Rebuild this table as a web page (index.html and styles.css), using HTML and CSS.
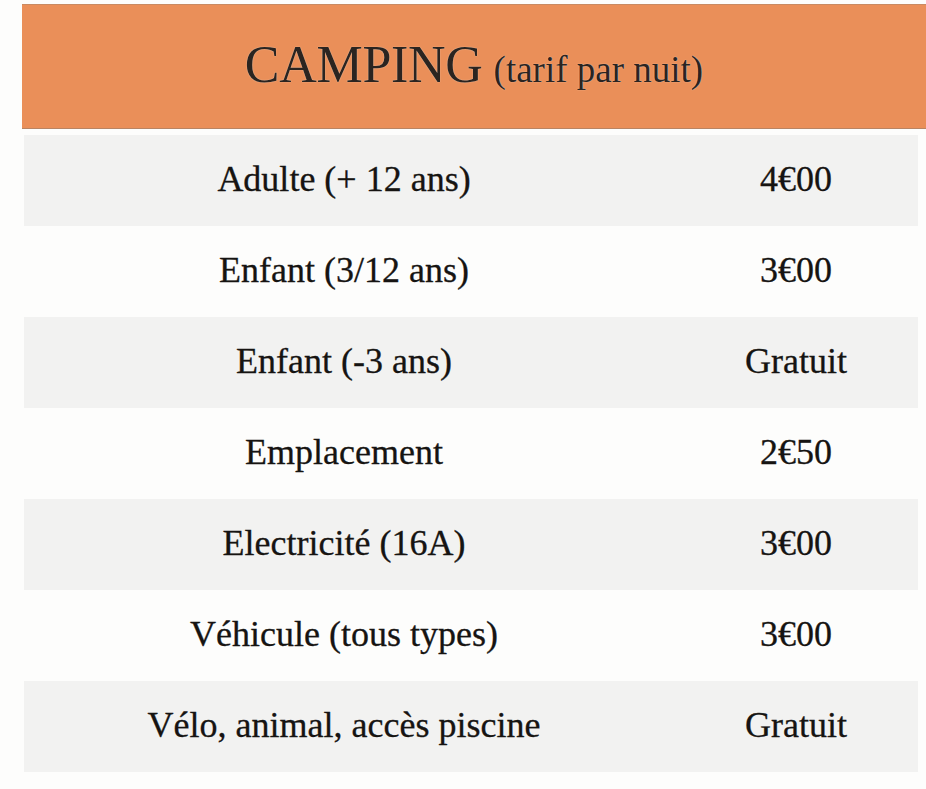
FILE: index.html
```html
<!DOCTYPE html>
<html lang="fr">
<head>
<meta charset="utf-8">
<title>Camping – tarifs</title>
<link rel="stylesheet" href="styles.css">
</head>
<body>
<div class="sheet">
  <header class="band">
    <h1 class="title"><span class="title-main">CAMPING</span> <span class="title-sub">(tarif par nuit)</span></h1>
  </header>
  <div class="prices">
    <div class="row shade"><span class="label">Adulte (+ 12 ans)</span><span class="price">4€00</span></div>
    <div class="row"><span class="label">Enfant (3/12 ans)</span><span class="price">3€00</span></div>
    <div class="row shade"><span class="label">Enfant (-3 ans)</span><span class="price">Gratuit</span></div>
    <div class="row"><span class="label">Emplacement</span><span class="price">2€50</span></div>
    <div class="row shade"><span class="label">Electricité (16A)</span><span class="price">3€00</span></div>
    <div class="row"><span class="label">Véhicule (tous types)</span><span class="price">3€00</span></div>
    <div class="row shade"><span class="label">Vélo, animal, accès piscine</span><span class="price">Gratuit</span></div>
  </div>
</div>
</body>
</html>
```

FILE: styles.css
```css
html, body {
  margin: 0;
  padding: 0;
  background: #fdfdfc;
}

.sheet {
  width: 926px;
  height: 789px;
  padding: 4px 0 0 22px;
  box-sizing: border-box;
  font-family: "Liberation Serif", "Times New Roman", serif;
  color: #161412;
}

.band {
  height: 125px;
  background: #ea8f59;
  border-top: 1px solid #c98a62;
  border-bottom: 1px solid #b98463;
  display: flex;
  align-items: center;
  justify-content: center;
  box-sizing: border-box;
}

.title {
  margin: 0 0 4px 0;
  font-weight: normal;
  color: #2b2420;
  text-shadow: 0 0 1px #f6e2d2;
  line-height: 1;
}

.title-main {
  font-size: 52px;
  letter-spacing: -0.3px;
}

.title-sub {
  font-size: 37px;
  margin-left: 3px;
}

.prices {
  margin: 6px 0 0 2px;
  width: 894px;
}

.row {
  display: grid;
  grid-template-columns: 640px 1fr;
  align-items: center;
  height: 91px;
  font-size: 36px;
  line-height: 1;
  padding-bottom: 3px;
  box-sizing: border-box;
  -webkit-text-stroke: 0.3px #161412;
}

.row.shade {
  background: #f2f2f1;
}

.label {
  text-align: center;
}

.price {
  text-align: center;
  padding-left: 10px;
}
```
